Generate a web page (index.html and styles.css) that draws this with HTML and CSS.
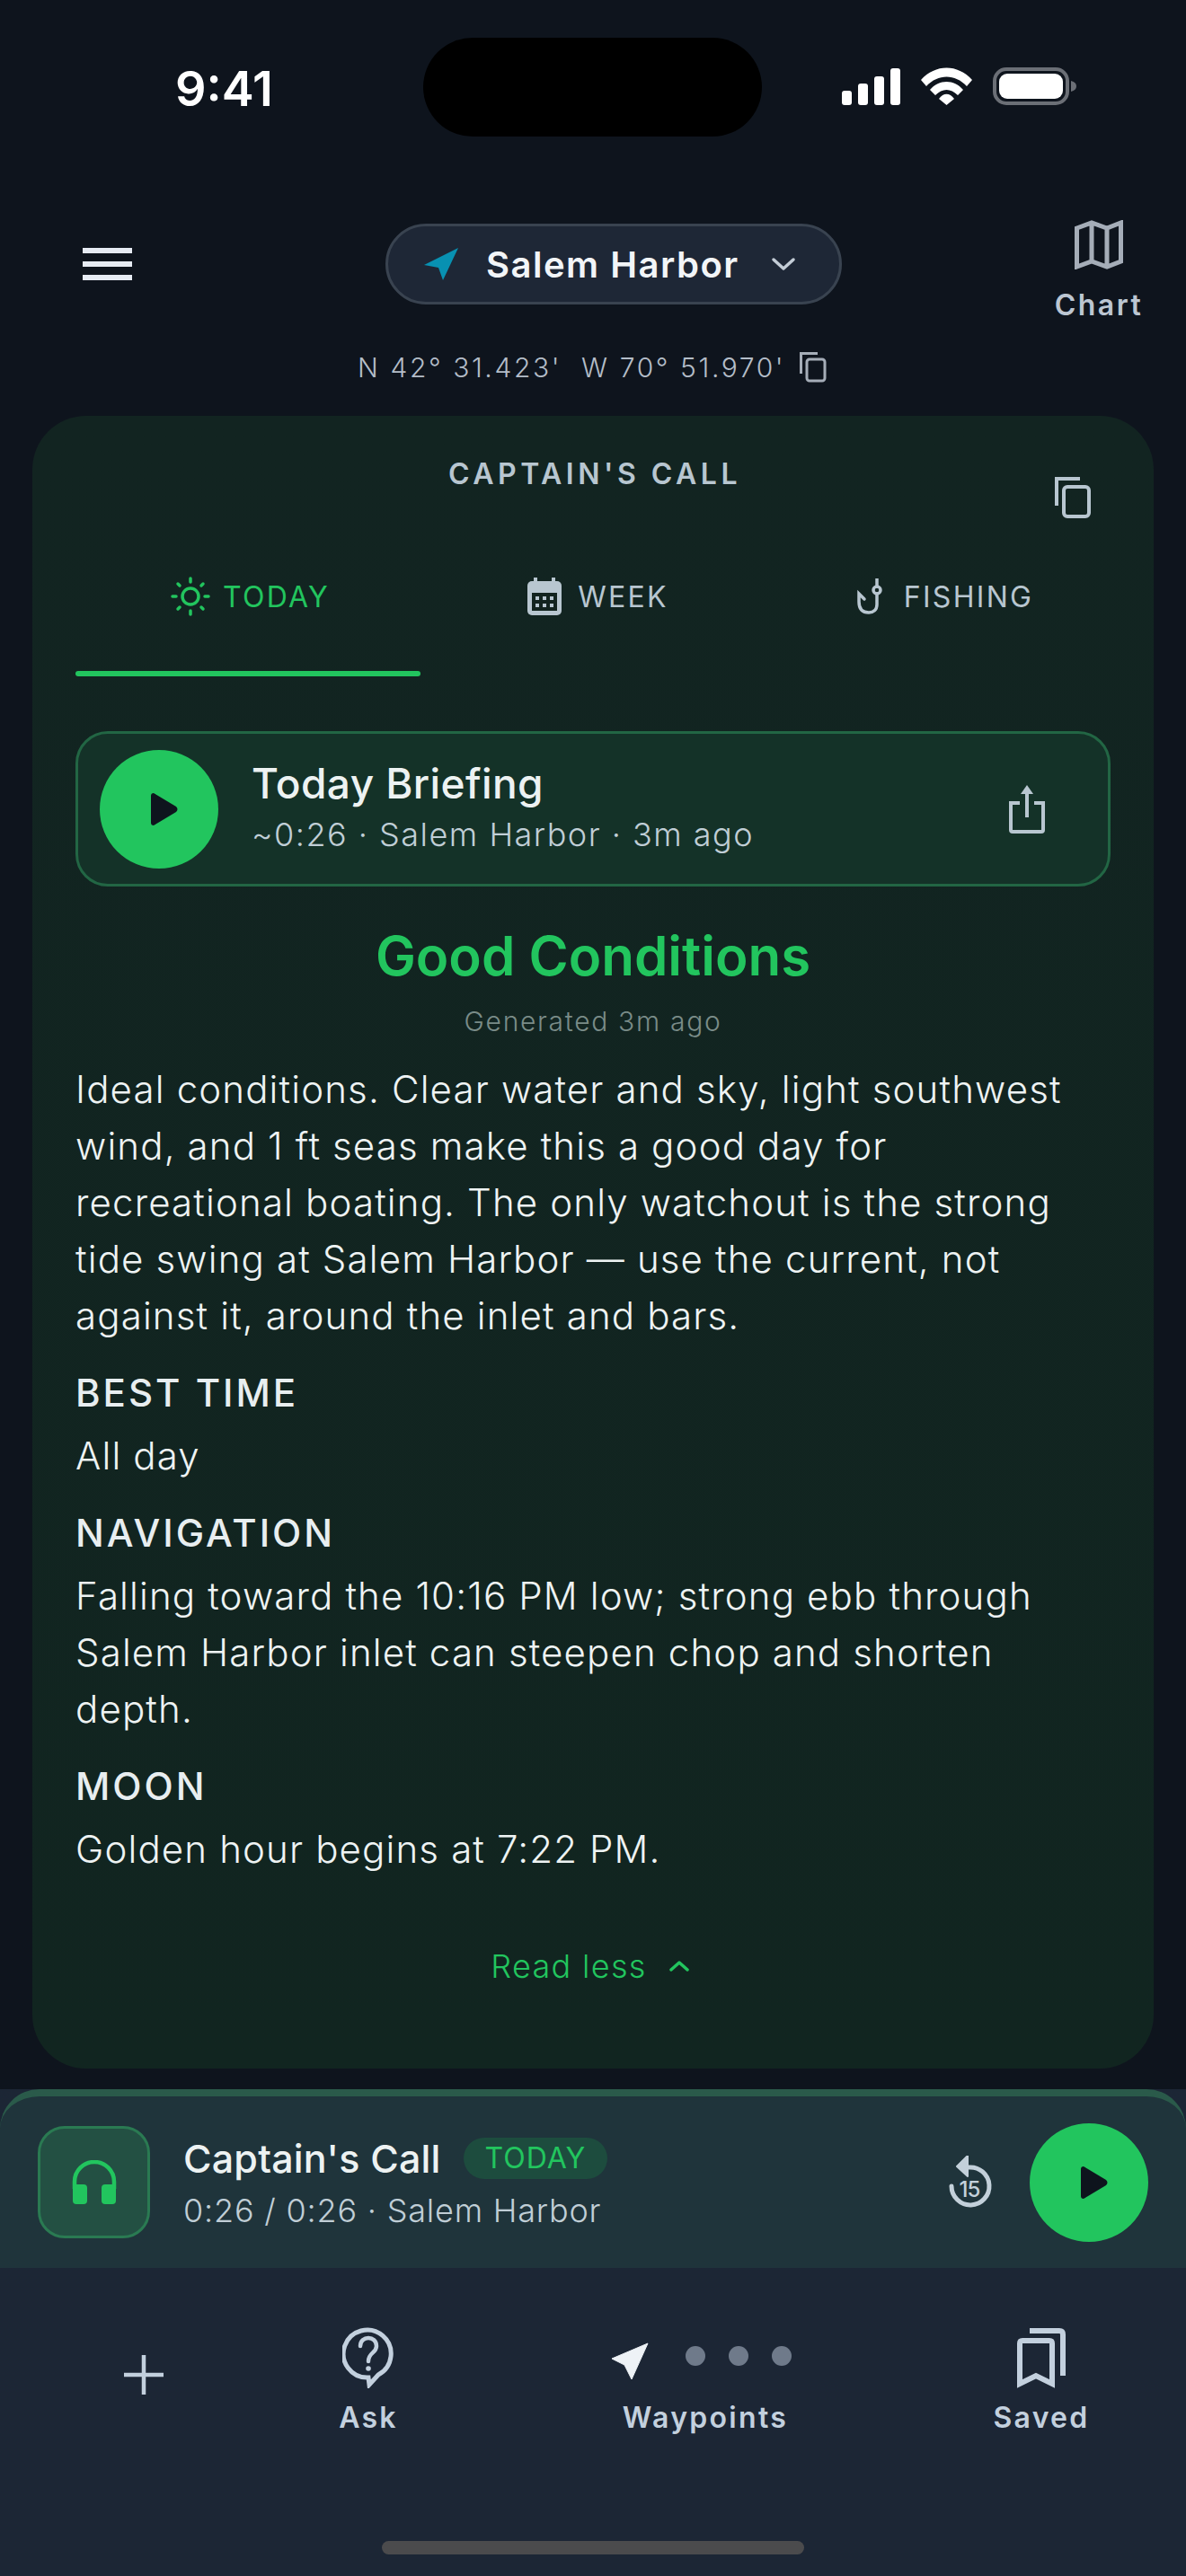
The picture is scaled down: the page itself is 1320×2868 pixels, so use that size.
FILE: index.html
```html
<!DOCTYPE html>
<html lang="en">
<head>
    <meta charset="UTF-8">
    <meta name="viewport" content="width=device-width, initial-scale=1.0">
    <title>Captain's Call - Salem Harbor</title>
    <link rel="stylesheet" href="styles.css">
</head>
<body>
    <div class="phone">
        <div class="status-bar">
            <div class="time">9:41</div>
            <div class="island"></div>
            <div class="status-icons">
                <svg width="65" height="41" viewBox="0 0 65 41" fill="#fff">
                    <rect x="0" y="25" width="11" height="16" rx="3"/>
                    <rect x="18" y="17" width="11" height="24" rx="3"/>
                    <rect x="36" y="9" width="11" height="32" rx="3"/>
                    <rect x="54" y="0" width="11" height="41" rx="3"/>
                </svg>
                <svg width="57" height="42" viewBox="0 0 57 42" fill="#fff">
                    <path d="M0 14 C16 -4 41 -4 57 14 L51 21 C38 7 19 7 6 21 Z"/>
                    <path d="M10 25 C20 13 37 13 47 25 L41 31 C33 23 24 23 16 31 Z"/>
                    <path d="M20 35 C25 28 32 28 37 35 L28.500 42 Z"/>
                </svg>
                <svg width="93" height="42" viewBox="0 0 93 42">
                    <rect x="2" y="2" width="81" height="38" rx="13" fill="none" stroke="#6b6f76" stroke-width="4"/>
                    <rect x="7" y="7" width="71" height="28" rx="9" fill="#fff"/>
                    <path d="M87 15 C91 16 93 18 93 21 C93 24 91 26 87 27 Z" fill="#6b6f76"/>
                </svg>
            </div>
        </div>

        <div class="top-bar">
            <div class="menu-btn"><span></span><span></span><span></span></div>
            <div class="harbor-pill">
                <svg width="38" height="36" viewBox="0 0 38 36" fill="#0891b2"><path d="M38 0 L0 19 L16 22 L21 36 Z"/></svg>
                <span class="harbor-name">Salem Harbor</span>
                <svg width="28" height="16" viewBox="0 0 28 16" fill="none" stroke="#c3ccd6" stroke-width="3.500" stroke-linecap="round" stroke-linejoin="round"><path d="M3 3 L14 13 L25 3"/></svg>
            </div>
            <div class="chart-btn">
                <svg width="54" height="55" viewBox="0 0 54 55" fill="none" stroke="#a5adb8" stroke-width="5"><path d="M2.500 9 L19 3 L36 9 L51.500 3 L51.500 46 L36 52 L19 46 L2.500 52 Z M19 3 V46 M36 9 V52"/></svg>
                <span>Chart</span>
            </div>
        </div>

        <div class="coords">
            <span>N 42° 31.423'&nbsp;&nbsp;W 70° 51.970'</span>
            <svg width="30" height="34" viewBox="0 0 30 34" fill="none" stroke="#a5adb8" stroke-width="3"><rect x="8" y="8" width="20" height="24" rx="3"/><path d="M1.500 24 V1.500 H20"/></svg>
        </div>

        <div class="call-card">
            <div class="card-head">
                <h2>CAPTAIN'S CALL</h2>
                <svg class="card-copy" width="40" height="46" viewBox="0 0 40 46" fill="none" stroke="#b8c6d0" stroke-width="4"><rect x="10" y="11" width="28" height="33" rx="4"/><path d="M2 32 V2 H28"/></svg>
            </div>

            <div class="tabs">
                <div class="tab active">
                    <svg width="44" height="44" viewBox="0 0 44 44" fill="none" stroke="#22c55e" stroke-width="3.500" stroke-linecap="round"><circle cx="22" cy="22" r="9"/><path d="M22 2 V6 M22 38 V42 M2 22 H6 M38 22 H42 M8 8 L10 10 M34 34 L36 36 M36 8 L34 10 M10 34 L8 36"/></svg>
                    <span>TODAY</span>
                </div>
                <div class="tab">
                    <svg width="38" height="42" viewBox="0 0 38 42"><rect x="7" y="0" width="4" height="8" fill="#b8c6d0"/><rect x="27" y="0" width="4" height="8" fill="#b8c6d0"/><rect x="0" y="4" width="38" height="38" rx="5" fill="#b8c6d0"/><rect x="5" y="17" width="28" height="20" fill="#12231f"/><g fill="#b8c6d0"><rect x="9" y="21" width="4" height="4"/><rect x="17" y="21" width="4" height="4"/><rect x="25" y="21" width="4" height="4"/><rect x="9" y="29" width="4" height="4"/><rect x="17" y="29" width="4" height="4"/><rect x="25" y="29" width="4" height="4"/></g></svg>
                    <span>WEEK</span>
                </div>
                <div class="tab">
                    <svg width="30" height="40" viewBox="0 0 30 40" fill="none" stroke="#b8c6d0" stroke-width="3.500" stroke-linecap="round"><path d="M23 0 V9"/><circle cx="23" cy="13" r="4"/><path d="M23 17 V29 C23 35 19 38 14 38 C7 38 3 34 3 26 V17 L9 23"/></svg>
                    <span>FISHING</span>
                </div>
            </div>
            <div class="tab-line"></div>

            <div class="briefing">
                <div class="play-btn">
                    <svg width="30" height="36" viewBox="0 0 30 36" fill="#0e141d"><path d="M3 0 L28 15 Q31 18 28 21 L3 36 Q0 36 0 33 V3 Q0 0 3 0 Z"/></svg>
                </div>
                <div class="briefing-text">
                    <div class="briefing-title">Today Briefing</div>
                    <div class="briefing-sub">~0:26 · Salem Harbor · 3m ago</div>
                </div>
                <svg class="share" width="40" height="54" viewBox="0 0 40 54" fill="none" stroke="#b8c6d0" stroke-width="4"><path d="M20 36 V6"/><path d="M20 0 L27 10 H13 Z" fill="#b8c6d0" stroke="none"/><path d="M12 20 H2 V50 Q2 52 4 52 H36 Q38 52 38 50 V20 H28"/></svg>
            </div>

            <div class="conditions">Good Conditions</div>
            <div class="generated">Generated 3m ago</div>

            <p class="body-text">Ideal conditions. Clear water and sky, light southwest wind, and 1 ft seas make this a good day for recreational boating. The only watchout is the strong tide swing at Salem Harbor — use the current, not against it, around the inlet and bars.</p>

            <h3>BEST TIME</h3>
            <p class="body-text">All day</p>

            <h3>NAVIGATION</h3>
            <p class="body-text">Falling toward the 10:16 PM low; strong ebb through Salem Harbor inlet can steepen chop and shorten depth.</p>

            <h3>MOON</h3>
            <p class="body-text">Golden hour begins at 7:22 PM.</p>

            <div class="read-less">
                <span>Read less</span>
                <svg width="24" height="14" viewBox="0 0 24 14" fill="none" stroke="#22c55e" stroke-width="3.500" stroke-linecap="round" stroke-linejoin="round"><path d="M3 11 L12 3 L21 11"/></svg>
            </div>
        </div>

        <div class="dock">
            <div class="player">
                <div class="player-tile">
                    <svg width="50" height="50" viewBox="0 0 50 50" fill="none"><path d="M3 32 V24 A22 22 0 0 1 47 24 V32" stroke="#22c55e" stroke-width="4.500"/><rect x="1" y="27" width="16" height="22" rx="4" fill="#22c55e"/><rect x="33" y="27" width="16" height="22" rx="4" fill="#22c55e"/></svg>
                </div>
                <div class="player-text">
                    <div class="player-title"><span>Captain's Call</span><span class="today-pill">TODAY</span></div>
                    <div class="player-sub">0:26 / 0:26 · Salem Harbor</div>
                </div>
                <svg class="rewind" width="50" height="60" viewBox="0 0 50 60"><path d="M3 34 A21 21 0 1 0 22 13" fill="none" stroke="#c3d0da" stroke-width="5" stroke-linecap="round"/><path d="M21 0 V23 L9 12 Z" fill="#c3d0da" stroke="#c3d0da" stroke-width="2" stroke-linejoin="round"/><text x="23" y="46" text-anchor="middle" class="rewind-num">15</text></svg>
                <div class="play-btn">
                    <svg width="30" height="36" viewBox="0 0 30 36" fill="#0e141d"><path d="M3 0 L28 15 Q31 18 28 21 L3 36 Q0 36 0 33 V3 Q0 0 3 0 Z"/></svg>
                </div>
            </div>

            <div class="nav-items">
                <div class="nav-item">
                    <svg class="plus" width="44" height="44" viewBox="0 0 44 44" fill="none" stroke="#c3d0de" stroke-width="4.500"><path d="M22 0 V44 M0 22 H44"/></svg>
                </div>
                <div class="nav-item">
                    <svg width="58" height="68" viewBox="0 0 58 68" fill="none" stroke="#c3d0de" stroke-width="5"><path d="M29 56 A26.500 26.500 0 1 1 40 53 L30 64 Z"/><path d="M20 21 C20 9 38 9 38 21 C38 29 29 28 29 38" stroke-width="4.500" stroke-linecap="round"/><circle cx="29" cy="46" r="2.800" fill="#c3d0de" stroke="none"/></svg>
                    <span>Ask</span>
                </div>
                <div class="nav-item">
                    <div class="waypoint-icons">
                        <svg width="42" height="42" viewBox="0 0 42 42" fill="#eef2f6" stroke="#eef2f6" stroke-width="1" stroke-linejoin="round"><path d="M41 1 L1 18 L15 25 L23 41 Z"/></svg>
                        <div class="dots"><i></i><i></i><i></i></div>
                    </div>
                    <span>Waypoints</span>
                </div>
                <div class="nav-item">
                    <svg width="54" height="68" viewBox="0 0 54 68" fill="none" stroke="#c3d0de" stroke-width="6"><path d="M3 63 V18 Q3 15 6 15 H36 Q39 15 39 18 V63 L21 54 Z"/><path d="M14 4 H47 Q51 4 51 8 V54"/></svg>
                    <span>Saved</span>
                </div>
            </div>
            <div class="home-bar"></div>
        </div>
    </div>
</body>
</html>
```

FILE: styles.css
```css
body {
    margin: 0;
    background-color: #0e141d;
    font-family: Inter, "Noto Sans", sans-serif;
    color: #e8eef0;
}
.phone {
    width: 1320px;
    height: 2868px;
    display: flex;
    flex-direction: column;
    overflow: hidden;
}

/* status bar */
.status-bar {
    height: 110px;
    margin-top: 42px;
    display: flex;
    align-items: center;
}
.time {
    width: 276px;
    margin-left: 195px;
    font-size: 54px;
    font-weight: 600;
    color: #fff;
    position: relative;
    top: 1px;
}
.island {
    width: 377px;
    height: 110px;
    border-radius: 55px;
    background-color: #000;
}
.status-icons {
    margin-left: 89px;
    display: flex;
    gap: 23px;
    align-items: center;
    position: relative;
    top: -1px;
}

/* top bar */
.top-bar {
    margin-top: 93px;
    height: 110px;
    display: flex;
    align-items: flex-start;
}
.menu-btn {
    width: 55px;
    height: 36px;
    margin: 31px 0 0 92px;
    display: flex;
    flex-direction: column;
    justify-content: space-between;
}
.menu-btn span {
    height: 6px;
    background-color: #e6ebf3;
}
.harbor-pill {
    width: 508px;
    height: 90px;
    margin: 4px 0 0 282px;
    box-sizing: border-box;
    border: 3px solid #394350;
    border-radius: 45px;
    background-color: #1e2736;
    display: flex;
    align-items: center;
    padding-left: 40px;
}
.harbor-name {
    margin-left: 31px;
    font-size: 40px;
    font-weight: 600;
    letter-spacing: 1.500px;
    color: #f2f5f8;
}
.harbor-pill svg:last-child {
    margin-left: 35px;
}
.chart-btn {
    margin-left: 239px;
    width: 94px;
    display: flex;
    flex-direction: column;
    align-items: center;
    font-size: 32px;
    font-weight: 600;
    letter-spacing: 2.500px;
    color: #bcc6d2;
}
.chart-btn span {
    margin-top: 20px;
}
.coords {
    margin-top: 36px;
    height: 36px;
    padding-left: 398px;
    display: flex;
    align-items: center;
    gap: 16px;
    font-size: 30px;
    font-weight: 300;
    letter-spacing: 2.600px;
    color: #b4bdc8;
}

/* card */
.call-card {
    margin: 36px 36px 0;
    height: 1840px;
    box-sizing: border-box;
    padding: 0 48px;
    border-radius: 60px;
    background: linear-gradient(#122421, #112520);
}
.card-head {
    position: relative;
    padding-top: 45px;
    height: 171px;
    box-sizing: border-box;
}
h2 {
    margin: 0;
    padding-left: 4px;
    text-align: center;
    font-size: 32px;
    font-weight: 600;
    letter-spacing: 4.500px;
    color: #b8c6d0;
}
.card-copy {
    position: absolute;
    top: 68px;
    right: 22px;
}
.tabs {
    display: grid;
    grid-template-columns: repeat(3, 1fr);
    height: 60px;
}
.tab {
    display: flex;
    align-items: center;
    justify-content: center;
    gap: 14px;
    font-size: 32px;
    font-weight: 400;
    letter-spacing: 2.300px;
    color: #b8c6d0;
}
.tab:nth-child(1) {
    padding-left: 5px;
}
.tab:nth-child(2) {
    padding-left: 11px;
    gap: 18px;
}
.tab:nth-child(3) {
    padding-left: 15px;
    gap: 23px;
}
.tab.active {
    color: #22c55e;
}
.tab-line {
    width: 384px;
    height: 6px;
    margin-top: 53px;
    border-radius: 3px;
    background-color: #22c55e;
}
.briefing {
    margin-top: 61px;
    height: 173px;
    box-sizing: border-box;
    border: 3px solid #226644;
    border-radius: 36px;
    background-color: #143228;
    display: flex;
    align-items: center;
    padding-left: 24px;
}
.play-btn {
    width: 132px;
    height: 132px;
    box-sizing: border-box;
    padding-left: 12px;
    border-radius: 50%;
    background-color: #22c55e;
    display: flex;
    align-items: center;
    justify-content: center;
    flex-shrink: 0;
}
.briefing-text {
    margin: 0 0 6px 37px;
    flex: 1;
}
.briefing-title {
    font-size: 46px;
    font-weight: 500;
    letter-spacing: 0.400px;
    color: #edf2f2;
    line-height: 56px;
}
.briefing-sub {
    margin-top: 6px;
    font-size: 36px;
    font-weight: 300;
    letter-spacing: 1.500px;
    color: #c0ced6;
    line-height: 46px;
}
.share {
    margin-right: 70px;
}
.conditions {
    margin-top: 42px;
    text-align: center;
    font-size: 60px;
    font-weight: 600;
    line-height: 70px;
    color: #22c55e;
}
.generated {
    margin-top: 20px;
    text-align: center;
    font-size: 30px;
    font-weight: 300;
    letter-spacing: 1.700px;
    line-height: 36px;
    color: #7a8c88;
}
.body-text {
    margin: 26px 0 0;
    font-size: 42px;
    font-weight: 300;
    line-height: 63px;
    letter-spacing: 1.150px;
    color: #eef3f3;
}
h3 {
    margin: 29px 0 0;
    font-size: 42px;
    font-weight: 500;
    line-height: 52px;
    letter-spacing: 3px;
    color: #e8eef0;
}
h3 + .body-text {
    margin-top: 12px;
}
.read-less {
    margin-top: 77px;
    padding-right: 6px;
    display: flex;
    align-items: center;
    justify-content: center;
    gap: 24px;
    font-size: 36px;
    font-weight: 300;
    letter-spacing: 1.300px;
    color: #22c55e;
}

/* player and bottom nav */
.dock {
    flex: 1;
    margin-top: 23px;
    background-color: #1c2635;
    display: flex;
    flex-direction: column;
}
.player {
    height: 199px;
    box-sizing: border-box;
    border-top: 8px solid #2a5a4a;
    border-radius: 44px 44px 0 0;
    background-color: #1f343b;
    display: flex;
    align-items: center;
    padding: 0 42px;
}
.player-tile {
    width: 125px;
    height: 125px;
    box-sizing: border-box;
    border: 3px solid #2a7a52;
    border-radius: 30px;
    background-color: #235043;
    display: flex;
    align-items: center;
    justify-content: center;
    flex-shrink: 0;
}
.player-text {
    margin-left: 37px;
    flex: 1;
}
.player-title {
    display: flex;
    align-items: center;
    gap: 25px;
    font-size: 43px;
    font-weight: 500;
    letter-spacing: 0.200px;
    color: #edf2f2;
}
.today-pill {
    padding: 0 24px;
    height: 46px;
    line-height: 46px;
    border-radius: 23px;
    background-color: #1d4c3e;
    font-size: 32px;
    font-weight: 400;
    letter-spacing: 1px;
    color: #22c55e;
}
.player-sub {
    margin-top: 10px;
    font-size: 36px;
    font-weight: 300;
    letter-spacing: 0.800px;
    color: #c0ced6;
}
.rewind {
    margin-right: 40px;
}
.rewind-num {
    font-size: 24px;
    font-weight: 500;
    letter-spacing: -1px;
    fill: #c3d0da;
}
.nav-items {
    margin-top: 66px;
    display: grid;
    grid-template-columns: 320px 180px 570px 178px;
    height: 238px;
}
.nav-item {
    display: flex;
    flex-direction: column;
    align-items: center;
    font-size: 32px;
    font-weight: 600;
    letter-spacing: 2.300px;
    color: #c3d0de;
}
.nav-item span {
    margin-top: 13px;
}
.plus {
    margin-top: 31px;
}
.waypoint-icons {
    height: 68px;
    display: flex;
    align-items: flex-start;
    gap: 41px;
    padding: 17px 10px 0 0;
    box-sizing: border-box;
}
.dots {
    display: flex;
    gap: 26px;
    padding-top: 4px;
}
.dots i {
    width: 22px;
    height: 22px;
    border-radius: 50%;
    background-color: #6f7a8a;
}
.home-bar {
    width: 470px;
    height: 15px;
    margin: 0 auto;
    border-radius: 8px;
    background-color: #4b4b4d;
}
```
